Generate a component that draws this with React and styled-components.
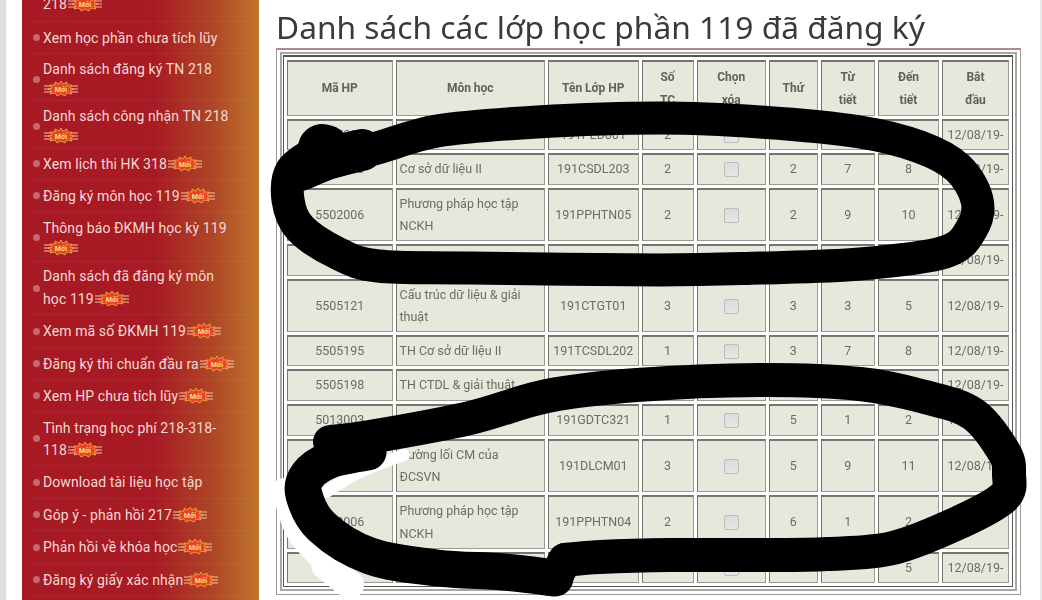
import styled, { createGlobalStyle } from "styled-components";

const GlobalStyle = createGlobalStyle`
  html, body {
    margin: 0;
    padding: 0;
    background: #fff;
  }
`;

const menuItems = [
  { label: "218", badge: true, h: 22, cut: true },
  { label: "Xem học phần chưa tích lũy", h: 32 },
  { label: "Danh sách đăng ký TN 218", badge: true, h: 47, pt: 4 },
  { label: "Danh sách công nhận TN 218", badge: true, h: 47, pt: 4 },
  { label: "Xem lịch thi HK 318", badge: true, h: 32 },
  { label: "Đăng ký môn học 119", badge: true, h: 32 },
  { label: "Thông báo ĐKMH học kỳ 119", badge: true, h: 50, pt: 2 },
  { label: "Danh sách đã đăng ký môn học 119", badge: true, h: 53, lh: 23 },
  { label: "Xem mã số ĐKMH 119", badge: true, h: 33 },
  { label: "Đăng ký thi chuẩn đầu ra", badge: true, h: 32 },
  { label: "Xem HP chưa tích lũy", badge: true, h: 32 },
  { label: "Tình trạng học phí 218-318-118", badge: true, h: 54, lh: 22 },
  { label: "Download tài liệu học tập", h: 33 },
  { label: "Góp ý - phản hồi 217", badge: true, h: 32 },
  { label: "Phản hồi về khóa học", badge: true, h: 33 },
  { label: "Đăng ký giấy xác nhận", badge: true, h: 32 },
];

const columns = [105.5, 149.5, 90.5, 52, 69.5, 48.5, 54.5, 61, 67];

const heads = [
  ["Mã HP"],
  ["Môn học"],
  ["Tên Lớp HP"],
  ["Số", "TC"],
  ["Chọn", "xóa"],
  ["Thứ"],
  ["Từ", "tiết"],
  ["Đến", "tiết"],
  ["Bắt", "đầu"],
];

const rows = [
  { h: 31, code: "5505205", name: "", cls: "191PED001", tc: "2", day: "", from: "", to: "", date: "12/08/19-" },
  { h: 32, code: "5505203", name: "Cơ sở dữ liệu II", cls: "191CSDL203", tc: "2", day: "2", from: "7", to: "8", date: "12/08/19-" },
  { h: 53, code: "5502006", name: "Phương pháp học tập NCKH", cls: "191PPHTN05", tc: "2", day: "2", from: "9", to: "10", date: "12/08/19-" },
  { h: 32, code: "", name: "", cls: "", tc: "", day: "", from: "", to: "", date: "12/08/19-" },
  { h: 53, code: "5505121", name: "Cấu trúc dữ liệu & giải thuật", cls: "191CTGT01", tc: "3", day: "3", from: "3", to: "5", date: "12/08/19-" },
  { h: 31, code: "5505195", name: "TH Cơ sở dữ liệu II", cls: "191TCSDL202", tc: "1", day: "3", from: "7", to: "8", date: "12/08/19-" },
  { h: 32, code: "5505198", name: "TH CTDL & giải thuật", cls: "", tc: "", day: "", from: "", to: "", date: "12/08/19-" },
  { h: 32, code: "5013003", name: "", cls: "191GDTC321", tc: "1", day: "5", from: "1", to: "2", date: "12/08/19-" },
  { h: 53, code: "", name: "Đường lối CM của ĐCSVN", cls: "191DLCM01", tc: "3", day: "5", from: "9", to: "11", date: "12/08/19-" },
  { h: 54, code: "5502006", name: "Phương pháp học tập NCKH", cls: "191PPHTN04", tc: "2", day: "6", from: "1", to: "2", date: "" },
  { h: 31, code: "", name: "", cls: "", tc: "", day: "", from: "", to: "5", date: "12/08/19-" },
];

// catmull-rom through the traced points, the pen strokes are too wobbly to write by hand
function smooth(points) {
  let d = `M ${points[0][0]} ${points[0][1]}`;
  for (let i = 0; i < points.length - 1; i++) {
    const p0 = points[i - 1] || points[i];
    const p1 = points[i];
    const p2 = points[i + 1];
    const p3 = points[i + 2] || p2;
    const c1x = p1[0] + (p2[0] - p0[0]) / 6;
    const c1y = p1[1] + (p2[1] - p0[1]) / 6;
    const c2x = p2[0] - (p3[0] - p1[0]) / 6;
    const c2y = p2[1] - (p3[1] - p1[1]) / 6;
    d += ` C ${c1x} ${c1y} ${c2x} ${c2y} ${p2[0]} ${p2[1]}`;
  }
  return d;
}

const upperStroke = [
  [326, 150], [365, 151], [437, 131], [537, 122], [660, 118], [760, 122], [860, 132], [920, 147],
  [958, 168], [977, 200], [972, 228], [945, 252], [860, 264], [760, 268], [660, 270], [470, 268],
  [378, 266], [337, 253], [300, 228], [288, 200], [292, 170], [320, 150],
];
const upperBlob = [[300, 170], [330, 158], [362, 150]];
const upperDot = [[322, 148], [326, 149]];

const lowerStroke = [
  [330, 442], [370, 437], [470, 418], [547, 396], [637, 385], [760, 380], [860, 384], [925, 397],
  [973, 414], [1004, 452], [1009, 474], [1004, 497], [960, 522], [893, 548], [827, 554], [760, 555],
  [670, 555], [600, 557], [565, 560],
];

const lowerReturn = [
  [555, 578], [503, 572], [437, 568], [370, 556], [322, 527], [304, 495], [308, 475], [330, 460], [368, 452],
];

const whiteOuter = [[284, 490], [300, 535], [345, 580]];
const whiteInner = [[326, 492], [360, 472], [404, 455]];

const Page = styled.div`
  position: relative;
  display: flex;
  width: 1042px;
  height: 600px;
  overflow: hidden;
  background: #fff;
  font-family: Roboto, "Liberation Sans", sans-serif;
`;

const Content = styled.div`
  display: flex;
  flex: 1;
  min-width: 0;
  filter: blur(0.4px);
`;

const LeftStrip = styled.div`
  width: 6px;
  background: #dfdfdf;
  flex-shrink: 0;
`;

const RightEdge = styled.div`
  width: 2px;
  background: #e9e9e9;
  flex-shrink: 0;
`;

const Sidebar = styled.nav`
  width: 237px;
  margin-left: 16px;
  height: 600px;
  overflow: hidden;
  flex-shrink: 0;
  background: linear-gradient(90deg, #a71a24 0%, #a71b24 56%, #ae4526 80%, #c0752b 100%);
`;

const MenuList = styled.ul`
  list-style: none;
  margin: 0;
  padding: 0 11px 0 10px;
`;

const MenuRow = styled.li`
  display: flex;
  align-items: ${(p) => (p.$cut ? "flex-end" : "center")};
  height: ${(p) => p.$h}px;
  padding-top: ${(p) => p.$pt || 0}px;
  padding-bottom: ${(p) => (p.$cut ? "7px" : "0")};
  box-sizing: border-box;
  border-bottom: 1px solid rgba(255, 255, 255, 0.05);
`;

const Bullet = styled.span`
  width: 7px;
  height: 7px;
  border-radius: 50%;
  background: ${(p) => (p.$off ? "transparent" : "#c46a6b")};
  flex-shrink: 0;
  margin-left: 1px;
  margin-right: 3px;
`;

const MenuText = styled.span`
  max-width: 194px;
  font-size: 14px;
  letter-spacing: 0.1px;
  line-height: ${(p) => p.$lh || 20}px;
  color: #f6d9d2;
`;

const BadgeSvg = styled.svg`
  display: inline-block;
  width: 36px;
  height: 16px;
  vertical-align: -3px;
`;

function NewBadge() {
  return (
    <BadgeSvg viewBox="0 0 36 16">
      <path d="M1 5h9M1 8h9M1 11h9M26 5h9M26 8h9M26 11h9" stroke="#f6bfa4" strokeWidth="1" />
      <polygon
        points="18,0 20,3 24,1 24,4 29,4 27,7 31,8 27,10 29,13 24,12 22,15 18,13 14,15 12,12 7,13 9,10 5,8 9,7 7,4 12,4 12,1 16,3"
        fill="#e8402a"
        stroke="#f7c53d"
        strokeWidth="0.7"
      />
      <text x="18" y="10.5" textAnchor="middle" fontSize="7" fontWeight="700" fill="#ffe27a" fontFamily="Roboto, sans-serif">
        Mới
      </text>
    </BadgeSvg>
  );
}

const Main = styled.main`
  flex: 1;
  min-width: 0;
  padding-left: 17px;
`;

const Heading = styled.h1`
  margin: 0;
  height: 48px;
  padding-top: 8px;
  box-sizing: border-box;
  font-family: "Noto Sans", Roboto, sans-serif;
  font-weight: 400;
  font-size: 31.7px;
  line-height: 38px;
  color: #3a3a3a;
  white-space: nowrap;
`;

const OuterFrame = styled.div`
  width: 745px;
  box-sizing: border-box;
  padding: 2px 3px 3px;
  border: 1px solid #9a9a9a;
  border-top: 2px solid #b08d8b;
`;

const InnerFrame = styled.div`
  padding: 1px 1px 2px;
  border: 2px solid #a6a8a4;
`;

const Table = styled.table`
  border-collapse: separate;
  border-spacing: 3px;
  table-layout: fixed;
  border: 1px solid #55574f;
  border-top-width: 2px;
  width: 728px;
  background: #fff;
`;

const Cell = styled.td`
  padding: 0 3px;
  box-sizing: border-box;
  background: #e6e8dc;
  border: 1px solid #74766e;
  border-top: 2px solid #74766e;
  border-right-color: #9a9c94;
  border-bottom-color: #9a9c94;
  height: ${(p) => p.$h}px;
  font-size: 12.5px;
  line-height: 22.5px;
  color: #6b6c66;
  text-align: ${(p) => (p.$left ? "left" : "center")};
  white-space: ${(p) => (p.$left ? "normal" : "nowrap")};
`;

const HeadCell = styled.th`
  padding: 0 2px;
  box-sizing: border-box;
  background: #e6e8dc;
  border: 1px solid #74766e;
  border-top: 2px solid #74766e;
  border-right-color: #9a9c94;
  border-bottom-color: #9a9c94;
  height: 56px;
  font-size: 12px;
  font-weight: 700;
  line-height: 23px;
  color: #60615b;
  text-align: center;
`;

const Check = styled.input.attrs({ type: "checkbox" })`
  appearance: none;
  display: block;
  width: 15px;
  height: 15px;
  margin: 0 auto;
  box-sizing: border-box;
  border: 1px solid #bdbdbb;
  border-radius: 2px;
  background: linear-gradient(#dcdcdc, #e6e6e4);
`;

const Overlay = styled.svg`
  position: absolute;
  left: 0;
  top: 0;
  width: 1042px;
  height: 600px;
  pointer-events: none;
`;

function Pen({ points, color = "#000", width = 33 }) {
  return <path d={smooth(points)} fill="none" stroke={color} strokeWidth={width} strokeLinecap="round" strokeLinejoin="round" />;
}

export default function App() {
  return (
    <>
      <GlobalStyle />
      <Page>
        <Content>
          <LeftStrip />
          <Sidebar>
            <MenuList>
              {menuItems.map((item) => (
                <MenuRow key={item.label} $h={item.h} $cut={item.cut} $pt={item.pt}>
                  <Bullet $off={item.cut} />
                  <MenuText $lh={item.lh}>
                    {item.label}
                    {item.badge && <NewBadge />}
                  </MenuText>
                </MenuRow>
              ))}
            </MenuList>
          </Sidebar>
          <Main>
            <Heading>Danh sách các lớp học phần 119 đã đăng ký</Heading>
            <OuterFrame>
              <InnerFrame>
                <Table>
                  <colgroup>
                    {columns.map((w, i) => (
                      <col key={i} style={{ width: w }} />
                    ))}
                  </colgroup>
                  <thead>
                    <tr>
                      {heads.map((lines) => (
                        <HeadCell key={lines[0]}>
                          {lines[0]}
                          {lines[1] && <br />}
                          {lines[1]}
                        </HeadCell>
                      ))}
                    </tr>
                  </thead>
                  <tbody>
                    {rows.map((r, i) => (
                      <tr key={i}>
                        <Cell $h={r.h}>{r.code}</Cell>
                        <Cell $h={r.h} $left>{r.name}</Cell>
                        <Cell $h={r.h}>{r.cls}</Cell>
                        <Cell $h={r.h}>{r.tc}</Cell>
                        <Cell $h={r.h}><Check /></Cell>
                        <Cell $h={r.h}>{r.day}</Cell>
                        <Cell $h={r.h}>{r.from}</Cell>
                        <Cell $h={r.h}>{r.to}</Cell>
                        <Cell $h={r.h}>{r.date}</Cell>
                      </tr>
                    ))}
                  </tbody>
                </Table>
              </InnerFrame>
            </OuterFrame>
          </Main>
          <RightEdge />
        </Content>
        <Overlay viewBox="0 0 1042 600">
          <Pen points={whiteOuter} color="#fff" width={24} />
          <Pen points={[[325, 565], [350, 585]]} color="#fff" width={28} />
          <Pen points={whiteInner} color="#fff" width={12} />
          <Pen points={upperStroke} />
          <Pen points={upperBlob} width={42} />
          <Pen points={upperDot} width={48} />
          <Pen points={lowerStroke} width={34} />
          <Pen points={lowerReturn} width={37} />
          <Pen points={[[565, 560], [555, 578]]} width={34} />
        </Overlay>
      </Page>
    </>
  );
}
